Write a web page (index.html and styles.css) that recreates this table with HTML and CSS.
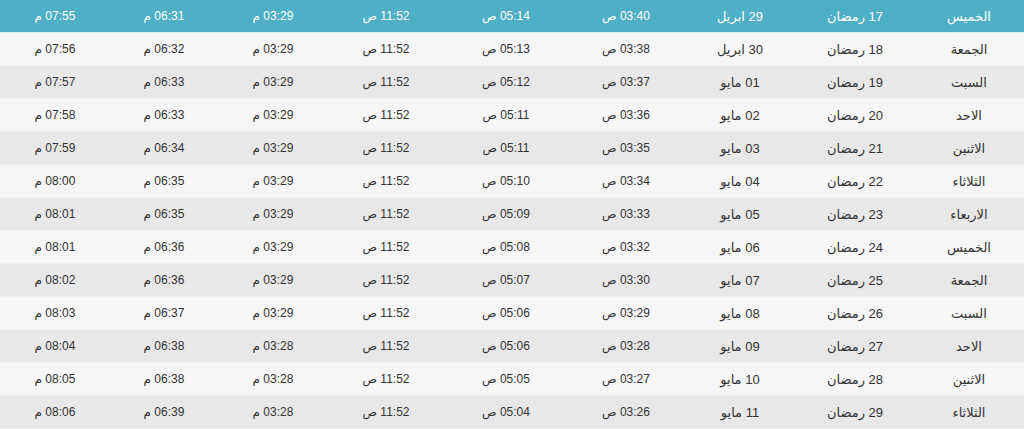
FILE: index.html
```html
<!DOCTYPE html>
<html lang="ar" dir="rtl">
<head>
<meta charset="utf-8">
<title>إمساكية رمضان</title>
<link rel="stylesheet" href="styles.css">
</head>
<body>
<table class="times">
<colgroup>
<col class="c-day"><col class="c-hijri"><col class="c-greg"><col class="c-imsak"><col class="c-fajr"><col class="c-dhuhr"><col class="c-asr"><col class="c-maghrib"><col class="c-isha">
</colgroup>
<tbody>
<tr class="today"><td>الخميس</td><td>17 رمضان</td><td>29 ابريل</td><td>03:40 ص</td><td>05:14 ص</td><td>11:52 ص</td><td>03:29 م</td><td>06:31 م</td><td>07:55 م</td></tr>
<tr><td>الجمعة</td><td>18 رمضان</td><td>30 ابريل</td><td>03:38 ص</td><td>05:13 ص</td><td>11:52 ص</td><td>03:29 م</td><td>06:32 م</td><td>07:56 م</td></tr>
<tr><td>السبت</td><td>19 رمضان</td><td>01 مايو</td><td>03:37 ص</td><td>05:12 ص</td><td>11:52 ص</td><td>03:29 م</td><td>06:33 م</td><td>07:57 م</td></tr>
<tr><td>الاحد</td><td>20 رمضان</td><td>02 مايو</td><td>03:36 ص</td><td>05:11 ص</td><td>11:52 ص</td><td>03:29 م</td><td>06:33 م</td><td>07:58 م</td></tr>
<tr><td>الاثنين</td><td>21 رمضان</td><td>03 مايو</td><td>03:35 ص</td><td>05:11 ص</td><td>11:52 ص</td><td>03:29 م</td><td>06:34 م</td><td>07:59 م</td></tr>
<tr><td>الثلاثاء</td><td>22 رمضان</td><td>04 مايو</td><td>03:34 ص</td><td>05:10 ص</td><td>11:52 ص</td><td>03:29 م</td><td>06:35 م</td><td>08:00 م</td></tr>
<tr><td>الاربعاء</td><td>23 رمضان</td><td>05 مايو</td><td>03:33 ص</td><td>05:09 ص</td><td>11:52 ص</td><td>03:29 م</td><td>06:35 م</td><td>08:01 م</td></tr>
<tr><td>الخميس</td><td>24 رمضان</td><td>06 مايو</td><td>03:32 ص</td><td>05:08 ص</td><td>11:52 ص</td><td>03:29 م</td><td>06:36 م</td><td>08:01 م</td></tr>
<tr><td>الجمعة</td><td>25 رمضان</td><td>07 مايو</td><td>03:30 ص</td><td>05:07 ص</td><td>11:52 ص</td><td>03:29 م</td><td>06:36 م</td><td>08:02 م</td></tr>
<tr><td>السبت</td><td>26 رمضان</td><td>08 مايو</td><td>03:29 ص</td><td>05:06 ص</td><td>11:52 ص</td><td>03:29 م</td><td>06:37 م</td><td>08:03 م</td></tr>
<tr><td>الاحد</td><td>27 رمضان</td><td>09 مايو</td><td>03:28 ص</td><td>05:06 ص</td><td>11:52 ص</td><td>03:28 م</td><td>06:38 م</td><td>08:04 م</td></tr>
<tr><td>الاثنين</td><td>28 رمضان</td><td>10 مايو</td><td>03:27 ص</td><td>05:05 ص</td><td>11:52 ص</td><td>03:28 م</td><td>06:38 م</td><td>08:05 م</td></tr>
<tr><td>الثلاثاء</td><td>29 رمضان</td><td>11 مايو</td><td>03:26 ص</td><td>05:04 ص</td><td>11:52 ص</td><td>03:28 م</td><td>06:39 م</td><td>08:06 م</td></tr>
</tbody>
</table>
</body>
</html>
```

FILE: styles.css
```css
html, body {
  margin: 0;
  padding: 0;
  background: #f6f6f6;
}
body {
  font-family: "Liberation Sans", "DejaVu Sans", sans-serif;
  font-size: 12px;
  color: #333;
}
.times {
  width: 1024px;
  border-collapse: collapse;
  table-layout: fixed;
}
.c-day { width: 110px; }
.c-hijri { width: 118px; }
.c-greg { width: 112px; }
.c-imsak { width: 116px; }
.c-fajr { width: 124px; }
.c-dhuhr { width: 116px; }
.c-asr { width: 110px; }
.c-maghrib { width: 108px; }
.c-isha { width: 110px; }
.times td {
  height: 32px;
  padding: 0;
  text-align: center;
  vertical-align: middle;
  border-bottom: 1px solid #f0f0f0;
  white-space: nowrap;
}
.times tr:nth-child(even) td {
  background: #f6f6f6;
}
.times tr:nth-child(odd) td {
  background: #e8e8e8;
}
.times tr.today td {
  background: #4eafc5;
  color: #fff;
  border-bottom-color: #dbeff4;
}
.times td:first-child,
.times td:nth-child(2),
.times td:nth-child(3) {
  font-size: 13px;
}
```
